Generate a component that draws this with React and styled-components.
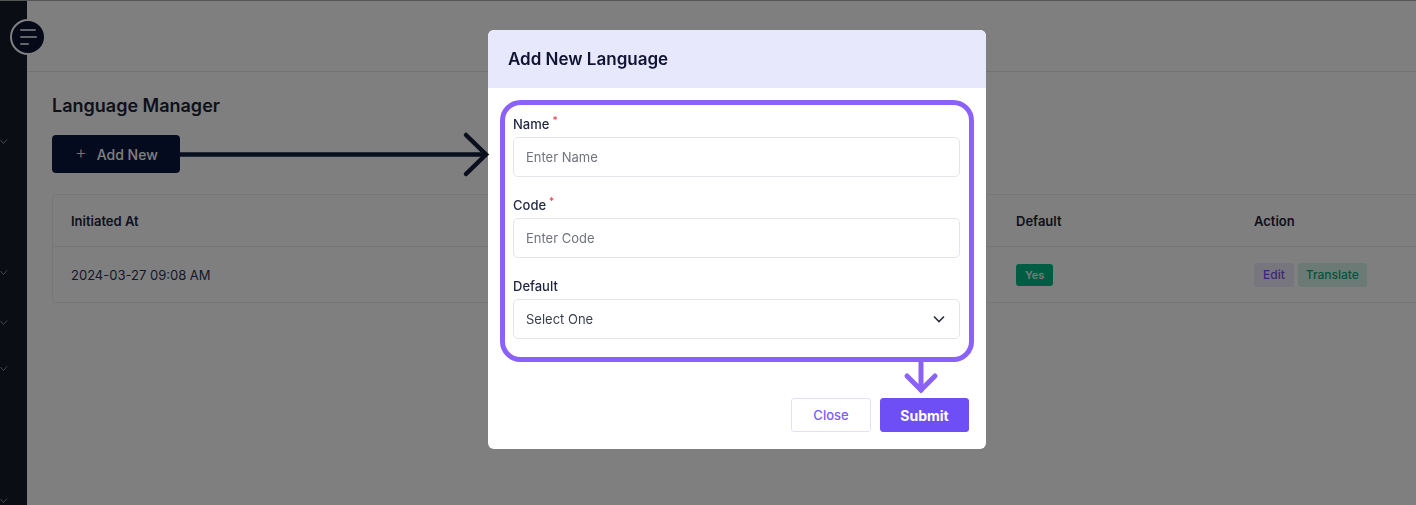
import React from 'react'
import styled, { createGlobalStyle } from 'styled-components'

const GlobalStyle = createGlobalStyle`
    * { box-sizing: border-box; }
    html, body { margin: 0; padding: 0; }
    body {
        font-family: Inter, "Noto Sans", sans-serif;
        background: #ffffff;
        overflow: hidden;
        width: 1416px;
        height: 505px;
    }
`

const Shell = styled.div`
    display: flex;
    height: 505px;
    border-top: 1px solid #aaaaaa;
`
const Sidebar = styled.aside`
    width: 27px;
    flex-shrink: 0;
    background: #141a26;
    display: flex;
    flex-direction: column;
`
const SideCaret = styled.div`
    margin-top: ${p => p.$gap}px;
    height: 8px;
    display: flex;
    align-items: center;
`
const Main = styled.main`
    flex: 1;
    display: flex;
    flex-direction: column;
    min-width: 0;
`
const Topbar = styled.header`
    height: 71px;
    flex-shrink: 0;
    border-bottom: 1px solid #e6e6ec;
    display: flex;
    align-items: flex-start;
`
const MenuButton = styled.button`
    width: 36px;
    height: 36px;
    margin: 18px 0 0 -17px;
    border-radius: 50%;
    border: 2px solid #ffffff;
    background: #0b1230;
    display: flex;
    flex-direction: column;
    justify-content: center;
    align-items: flex-start;
    gap: 5px;
    padding: 0 0 0 8px;
`
const MenuLine = styled.span`
    display: block;
    height: 2px;
    width: ${p => p.$w}px;
    background: #c8cbd6;
    border-radius: 1px;
`
const Content = styled.div`
    padding: 22px 0 0 25px;
`
const PageTitle = styled.h2`
    margin: 0;
    font-size: 18px;
    line-height: 24px;
    font-weight: 600;
    color: #1c2336;
`
const AddButton = styled.button`
    margin-top: 17px;
    width: 128px;
    height: 38px;
    border: none;
    border-radius: 4px;
    background: #0b173d;
    color: #ffffff;
    font-family: inherit;
    font-size: 14px;
    font-weight: 500;
    display: flex;
    align-items: center;
    gap: 10px;
    padding: 0 0 0 23px;
`
const Plus = styled.span`
    font-size: 18px;
    font-weight: 300;
    color: #ffd6e2;
    line-height: 1;
    margin-top: -2px;
`
const Card = styled.div`
    margin-top: 21px;
    width: 1380px;
    border: 1px solid #eeeef2;
    border-radius: 4px;
    background: #ffffff;
`
const Row = styled.div`
    display: grid;
    grid-template-columns: 560px 200px 185px 238px 1fr;
    height: ${p => p.$h}px;
    align-items: center;
    border-top: ${p => (p.$first ? 'none' : '1px solid #ececf1')};
`
const HeadCell = styled.div`
    padding-left: 18px;
    font-size: 13px;
    font-weight: 600;
    color: #1c2336;
`
const Cell = styled.div`
    padding-left: 18px;
    font-size: 13px;
    color: #2b3352;
    display: flex;
    gap: 4px;
`
const Badge = styled.span`
    display: inline-flex;
    align-items: center;
    justify-content: center;
    height: ${p => p.$h || 22}px;
    padding: 0 ${p => p.$px || 10}px;
    border-radius: 3px;
    font-size: ${p => p.$fs || 11}px;
    font-weight: ${p => p.$fw || 600};
    background: ${p => p.$bg};
    color: ${p => p.$fg};
`

const Overlay = styled.div`
    position: fixed;
    inset: 0;
    background: rgba(0, 0, 0, 0.5);
    display: flex;
    align-items: flex-start;
    padding: 30px 0 0 488px;
`
const Modal = styled.div`
    width: 498px;
    background: #ffffff;
    border-radius: 6px;
    overflow: hidden;
`
const ModalHead = styled.div`
    height: 58px;
    background: #e8e8fd;
    display: flex;
    align-items: center;
    padding: 0 0 1px 20px;
`
const ModalTitle = styled.h3`
    margin: 0;
    font-size: 17px;
    font-weight: 600;
    color: #0f1433;
`
const ModalBody = styled.div`
    padding: 28px 26px 35px 25px;
    display: flex;
    flex-direction: column;
    gap: 20px;
`
const Field = styled.div`
    display: flex;
    flex-direction: column;
`
const Label = styled.label`
    display: block;
    font-size: 13px;
    line-height: 16px;
    height: 16px;
    font-weight: 500;
    color: #1f2540;
    margin-bottom: 5px;
`
const Star = styled.span`
    position: relative;
    top: -5px;
    color: #ef3b4e;
    font-size: 10px;
    line-height: 0;
    margin-left: 3px;
`
const Input = styled.input`
    height: 40px;
    border: 1px solid #e4e4ea;
    border-radius: 5px;
    padding: 0 12px;
    font-family: inherit;
    font-size: 13px;
    color: #1f2540;
    outline: none;
    &::placeholder { color: #70747f; }
`
const Select = styled.div`
    height: 40px;
    border: 1px solid #e4e4ea;
    border-radius: 5px;
    padding: 0 14px 0 12px;
    display: flex;
    align-items: center;
    justify-content: space-between;
    font-size: 13px;
    color: #3a3f4f;
`
const Footer = styled.div`
    display: flex;
    justify-content: flex-end;
    gap: 9px;
    padding: 24px 17px 17px;
`
const FootButton = styled.button`
    height: 34px;
    width: ${p => p.$w}px;
    border-radius: 3px;
    font-family: inherit;
    font-size: ${p => (p.$primary ? 14 : 13)}px;
    font-weight: ${p => (p.$primary ? 700 : 500)};
    border: 1px solid ${p => (p.$primary ? '#6e4ff6' : '#e4e0fb')};
    background: ${p => (p.$primary ? '#6e4ff6' : '#ffffff')};
    color: ${p => (p.$primary ? '#ffffff' : '#7c5cfc')};
`
const Marks = styled.svg`
    position: fixed;
    left: 0;
    top: 0;
    pointer-events: none;
`

const Caret = ({ color = '#8b8f99' }) => (
  <svg width="9" height="6" viewBox="0 0 9 6">
    <polyline points="0.5,1 3.5,4.5 7,0.5" fill="none" stroke={color} strokeWidth="1" />
  </svg>
)

const App = () => {
  return (
    <>
      <GlobalStyle />
      <Shell>
        <Sidebar>
          <SideCaret $gap={137}><Caret /></SideCaret>
          <SideCaret $gap={123}><Caret /></SideCaret>
          <SideCaret $gap={42}><Caret /></SideCaret>
          <SideCaret $gap={38}><Caret /></SideCaret>
          <SideCaret $gap={124}><Caret /></SideCaret>
        </Sidebar>
        <Main>
          <Topbar>
            <MenuButton>
              <MenuLine $w={16} />
              <MenuLine $w={17} />
              <MenuLine $w={9} />
            </MenuButton>
          </Topbar>
          <Content>
            <PageTitle>Language Manager</PageTitle>
            <AddButton><Plus>+</Plus>Add New</AddButton>
            <Card>
              <Row $h={51} $first>
                <HeadCell>Initiated At</HeadCell>
                <HeadCell>Name</HeadCell>
                <HeadCell>Code</HeadCell>
                <HeadCell>Default</HeadCell>
                <HeadCell>Action</HeadCell>
              </Row>
              <Row $h={56}>
                <Cell>2024-03-27 09:08 AM</Cell>
                <Cell>English</Cell>
                <Cell>en</Cell>
                <Cell><Badge $bg="#00b884" $fg="#eef6f2" $px={9}>Yes</Badge></Cell>
                <Cell>
                  <Badge $bg="#efeafc" $fg="#7c4ff0" $h={24} $px={9} $fs={12} $fw={500}>Edit</Badge>
                  <Badge $bg="#d8f5ea" $fg="#0aa77a" $h={24} $px={8} $fs={12} $fw={500}>Translate</Badge>
                </Cell>
              </Row>
            </Card>
          </Content>
        </Main>
      </Shell>

      <Overlay>
        <Modal>
          <ModalHead>
            <ModalTitle>Add New Language</ModalTitle>
          </ModalHead>
          <ModalBody>
            <Field>
              <Label>Name<Star>*</Star></Label>
              <Input placeholder="Enter Name" />
            </Field>
            <Field>
              <Label>Code<Star>*</Star></Label>
              <Input placeholder="Enter Code" />
            </Field>
            <Field>
              <Label>Default</Label>
              <Select>
                <span>Select One</span>
                <svg width="12" height="8" viewBox="0 0 12 8">
                  <polyline points="1,1.5 6,6.5 11,1.5" fill="none" stroke="#2b2f3a" strokeWidth="1.6" />
                </svg>
              </Select>
            </Field>
          </ModalBody>
          <Footer>
            <FootButton $w={80}>Close</FootButton>
            <FootButton $w={89} $primary>Submit</FootButton>
          </Footer>
        </Modal>
      </Overlay>

      <Marks width="1416" height="505" viewBox="0 0 1416 505">
        <g stroke="#0a0f1f" strokeWidth="4.5" strokeLinecap="round" fill="none">
          <line x1="180" y1="154.5" x2="484" y2="154.5" />
          <polyline points="466,135 486,154.5 466,174" />
        </g>
        <g stroke="#8a62fb" strokeWidth="5" fill="none" strokeLinecap="round">
          <rect x="502.5" y="102.5" width="469" height="257" rx="18" />
          <line x1="921" y1="362" x2="921" y2="390" />
          <polyline points="907,376 921,390 935,376" />
        </g>
      </Marks>
    </>
  )
}

export default App
